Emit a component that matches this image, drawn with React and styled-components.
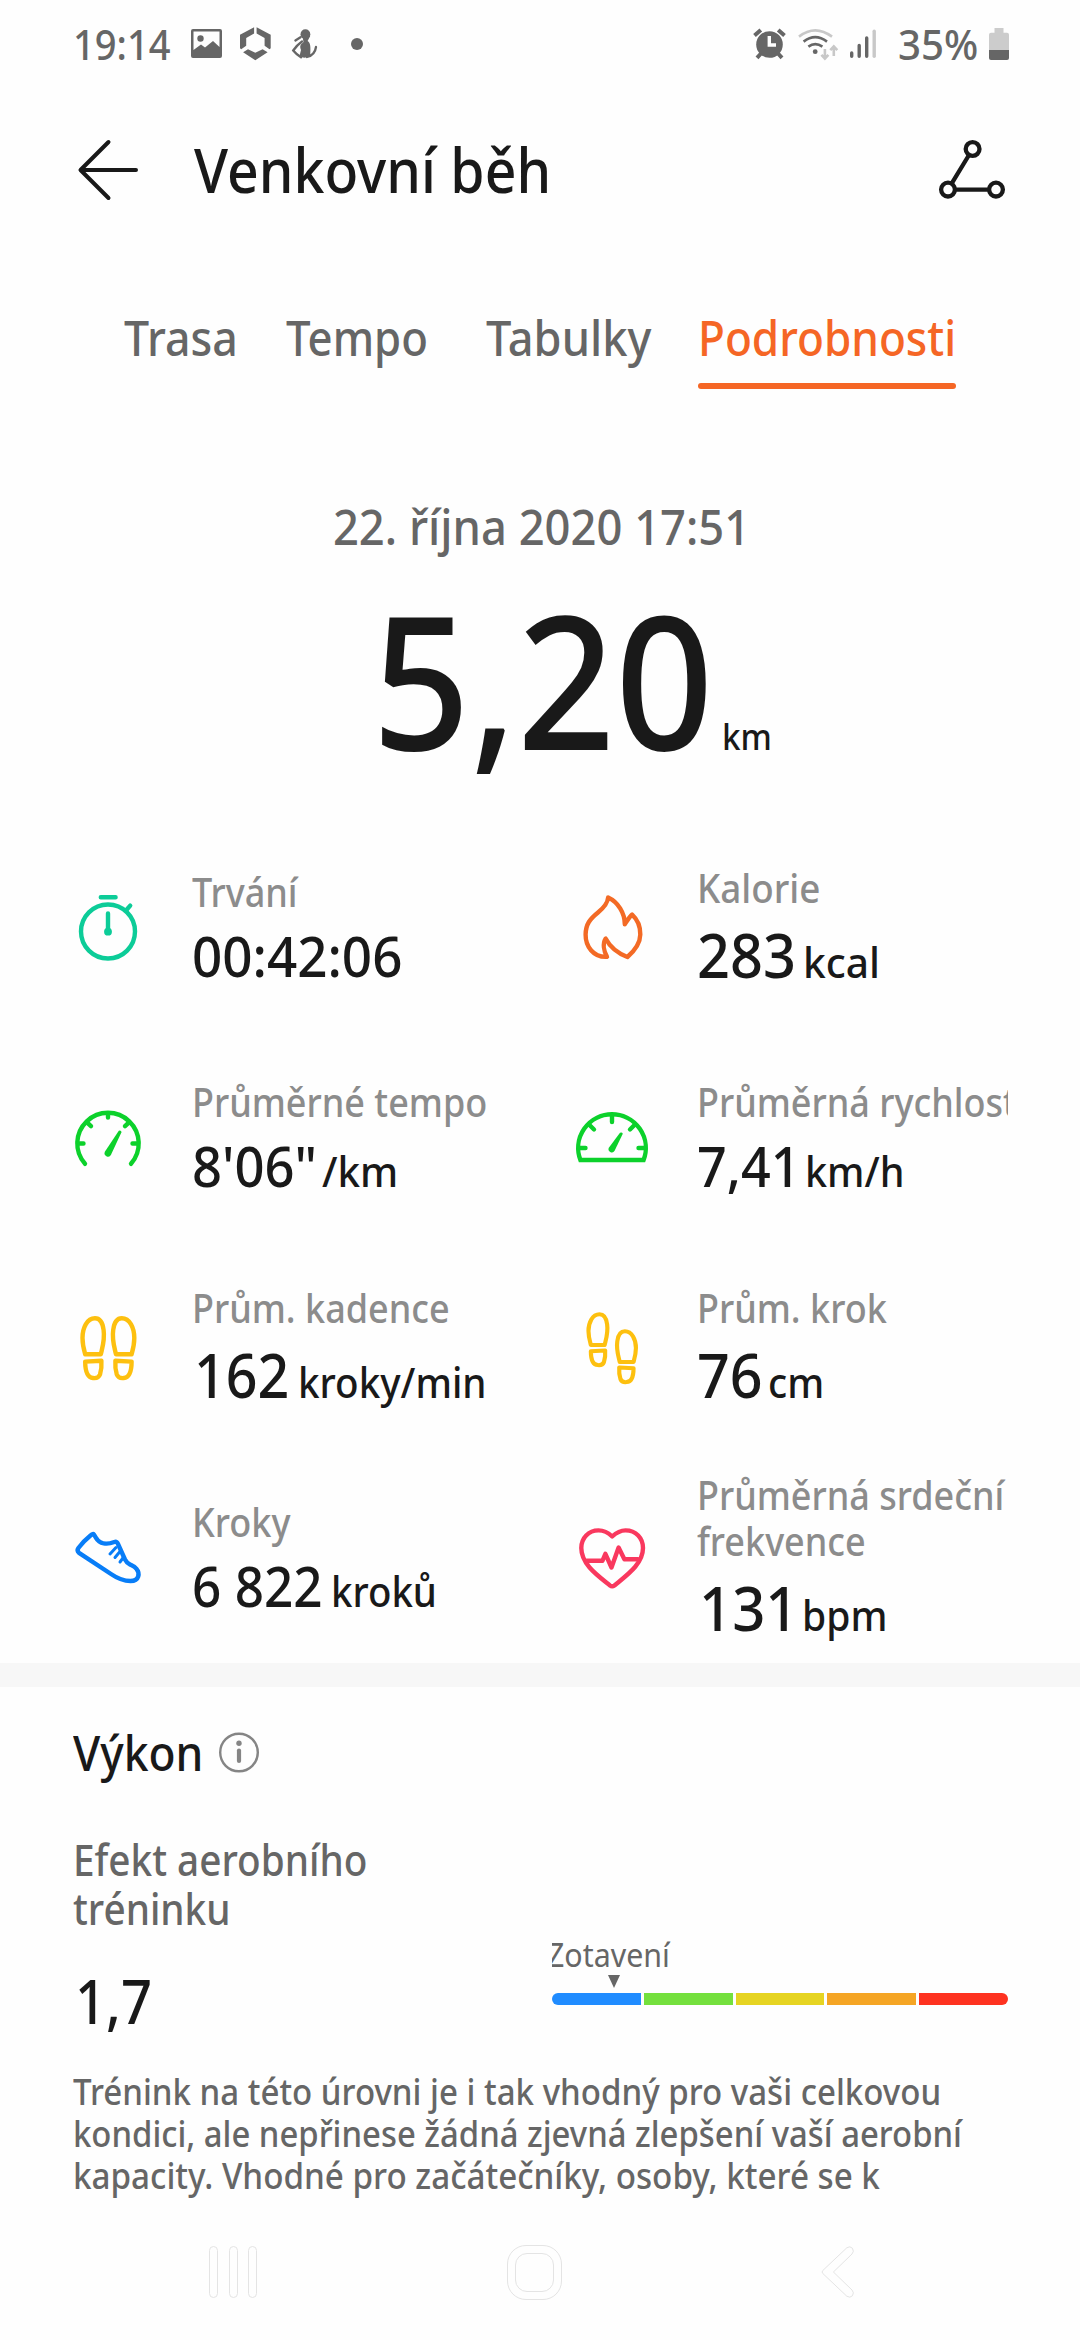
import React from 'react';
import styled, { createGlobalStyle } from 'styled-components';

const GlobalStyle = createGlobalStyle`
  body {
    margin: 0;
    background: #fefefe;
    font-family: 'Noto Sans', 'Open Sans', sans-serif;
    font-weight: 500;
    color: #191919;
  }

  svg {
    display: block;
    flex: none;
    overflow: visible;
  }
`;

const Screen = styled.div`
  display: flex;
  flex-direction: column;
  width: 1080px;
  height: 2340px;
  overflow: hidden;
`;

// The interface font runs narrow, so each text is squeezed a little
const Narrow = styled.span`
  display: inline-block;
  white-space: nowrap;
  transform: scaleX(${(p) => p.$fit || 0.9});
  transform-origin: ${(p) => p.$origin || 'left'} center;
`;

const StatusBar = styled.div`
  display: flex;
  justify-content: space-between;
  align-items: center;
  height: 87px;
  padding: 0 71px 0 73px;
  font-size: 41px;
  line-height: 50px;
  color: #666;
`;

const StatusGroup = styled.div`
  display: flex;
  align-items: center;
`;

const Clock = styled.div`
  width: 118px;
`;

const Percent = styled.div`
  width: 91px;
  margin-left: 22px;
`;

const StatusIcon = styled.svg`
  margin-right: ${(p) => p.$gap || 0}px;
`;

const Header = styled.header`
  display: flex;
  align-items: center;
  height: 166px;
  padding: 0 75px 0 78px;
`;

const Title = styled.h1`
  flex: 1;
  margin: 0 0 2px 55px;
  font-size: 62px;
  font-weight: 500;
  line-height: 84px;
`;

const Tabs = styled.nav`
  display: grid;
  grid-template-columns: 162px 200px 212px 258px;
  padding: 55px 0 0 124px;
`;

const Tab = styled.div`
  height: 75px;
  font-size: 49px;
  line-height: 58px;
  color: ${(p) => (p.$active ? '#f56625' : '#666')};
  border-bottom: 6px solid transparent;
`;

const ActiveLine = styled.div`
  height: 6px;
  margin-top: 17px;
  border-radius: 3px;
  background: #f56625;
`;

const DateLine = styled.div`
  margin-top: 107px;
  padding-left: 3px;
  font-size: 49px;
  line-height: 60px;
  text-align: center;
  color: #666;
`;

const Distance = styled.div`
  display: flex;
  align-items: baseline;
  height: 200px;
  margin-top: 22px;
  padding-left: 372px;
  font-size: 185px;
  line-height: 200px;
`;

const DistanceValue = styled.div`
  width: 350px;
`;

const DistanceUnit = styled.div`
  font-size: 36px;
  line-height: 44px;
`;

const Stats = styled.section`
  display: grid;
  grid-template-columns: 504px minmax(0, 1fr);
  grid-auto-rows: 210px;
  height: 836.5px;
  flex: none;
  margin-top: 48.5px;
  padding: 0 72px;
`;

const Stat = styled.div`
  display: flex;
  align-items: center;
  gap: ${(p) => p.$gap}px;
`;

const StatBody = styled.div`
  flex: 1;
  min-width: 0;
  padding-top: ${(p) => (p.$large ? 0 : 2)}px;
`;

const StatLabel = styled.div`
  margin: -5px 0;
  padding: 5px 0;
  overflow: hidden;
  font-size: 40px;
  line-height: 46px;
  color: #8c8c8c;
`;

const StatValue = styled.div`
  display: flex;
  align-items: baseline;
  height: ${(p) => (p.$large ? 88 : 81)}px;
  font-size: ${(p) => (p.$large ? 61 : 56)}px;
  line-height: ${(p) => (p.$large ? 88 : 81)}px;
`;

const Amount = styled.div`
  box-sizing: border-box;
  width: ${(p) => p.$width}px;
  padding-left: ${(p) => p.$inset || 0}px;
`;

const Unit = styled.div`
  font-size: 42px;
  line-height: 50px;
`;

const Divider = styled.div`
  flex: none;
  height: 24px;
  background: #f7f7f7;
`;

const Performance = styled.section`
  padding: 35px 72px 0 73px;
`;

const SectionTitle = styled.h2`
  display: flex;
  align-items: center;
  height: 60px;
  margin: 0;
  font-size: 48.5px;
  font-weight: 500;
  line-height: 60px;
`;

const SectionName = styled.span`
  width: 145.5px;
`;

const Effect = styled.div`
  display: flex;
  justify-content: space-between;
  margin-top: 53px;
`;

const EffectName = styled.div`
  font-size: 43px;
  line-height: 49px;
  color: #666;
`;

const EffectValue = styled.div`
  margin-top: 33px;
  padding-left: 2px;
  font-size: 61px;
  line-height: 70px;
`;

const Scale = styled.div`
  width: 456px;
  padding-top: 97px;
`;

const ScaleLabel = styled.div`
  overflow: hidden;
  height: 46px;
  font-size: 33px;
  font-weight: 400;
  line-height: 46px;
  color: #666;
`;

const ScaleName = styled.div`
  margin-left: -5px;
`;

const Marker = styled.div`
  width: 0;
  margin: -3px 0 0 56px;
  border: 6px solid transparent;
  border-top: 13px solid #666;
  border-bottom: 0;
`;

const ScaleBar = styled.div`
  display: grid;
  grid-template-columns: repeat(5, 1fr);
  gap: 3px;
  height: 12px;
  margin-top: 5px;
  border-radius: 6px;
  overflow: hidden;
`;

const Zone = styled.div`
  background: ${(p) => p.$color};
`;

const Advice = styled.div`
  margin-top: 34px;
  font-size: 37px;
  line-height: 42px;
  color: #666;
`;

const SystemNav = styled.footer`
  display: flex;
  align-items: center;
  height: 136px;
  margin-top: auto;
  padding-left: 209px;
`;

const Stroke = ({ color, width = 4.4, children }) => (
  <svg width="72" height="72" viewBox="0 0 72 72" fill="none" stroke={color} strokeWidth={width} strokeLinecap="round" strokeLinejoin="round">
    {children}
  </svg>
);

const StopwatchIcon = () => (
  <Stroke color="#0ccc98">
    <circle cx="36" cy="35.5" r="27" />
    <path d="M28.8 1.2H43.6M54.4 14L58.2 9.6M36 17.5V35" />
    <circle cx="36" cy="35.7" r="3.9" fill="#0ccc98" stroke="none" />
  </Stroke>
);

const FlameIcon = () => (
  <Stroke color="#f36a25">
    <path d="M32.1 1.5C42 6 48.8 17 48.8 28.3C51 25 53.5 20.5 56.1 18.6C62 24 64.4 31 64.3 38.5C64.2 47 60 53.5 51.4 61C42 57.5 34 51 29.6 42.6C26.5 47.5 27.8 55 31 60.8C17 61.5 9.5 50 9.6 38.5C9.8 28 14 23 22 16.5C28 11.5 31.8 7 32.1 1.5Z" />
  </Stroke>
);

const PaceIcon = () => (
  <Stroke color="#0cd12b">
    <path d="M13 57.8A30.7 30.7 0 1 1 59 57.8" />
    <path d="M6 37.5H11.5M66 37.5H60.5M36 8V11.5M15.5 16.8L19 20.2M56.5 16.8L53 20.2" />
    <path d="M46.8 24.8Q48.8 23.8 49.6 26L39 48.8A3.4 3.4 0 0 1 33 45.6Z" fill="#0cd12b" stroke="none" />
  </Stroke>
);

const SpeedIcon = () => (
  <Stroke color="#0cd12b">
    <path d="M4.4 54A33.8 33.8 0 1 1 67.6 54Z" strokeLinejoin="miter" />
    <path d="M3.5 42H9.5M68.5 42H62.5M36 9V16M13.5 19L18 23.5M58.5 19L54 23.5" />
    <path d="M44 26.8Q46 25.6 46.8 27.8L38.6 44.8A3.2 3.2 0 0 1 33 41.6Z" fill="#0cd12b" stroke="none" />
  </Stroke>
);

const Sole = (props) => (
  <g {...props}>
    <path d="M13.2 38.3H28.8C30.5 31 33 24 31.6 14C30.5 5.5 27 2.3 23 2.3C15 2.3 10.5 12 10.5 22C10.5 29 12 34 13.2 38.3Z" />
    <path d="M13.2 45.6L29.4 44.7C29.7 49 29.5 54 28 58.5C26.5 62.2 24 62.4 21 62C14.5 61.5 13.2 54 13.2 45.6Z" />
  </g>
);

const CadenceIcon = () => (
  <Stroke color="#fdc00f">
    <Sole />
    <Sole transform="translate(72.8 0) scale(-1 1)" />
  </Stroke>
);

const StepIcon = () => (
  <Stroke color="#fdc00f" width={4.7}>
    <Sole transform="translate(3.2 -3.6) scale(.883 .85)" />
    <Sole transform="translate(69.2 13.4) scale(-.883 .85)" />
  </Stroke>
);

const ShoeIcon = () => (
  <Stroke color="#087df7">
    <path d="M18.5 9.5C13.5 13.5 9.5 18 6.4 22C5.2 23.8 5.5 25.5 7 26.8L39 48C44.5 51.8 50.5 55 58.5 55C67.5 55 68 47 64.5 42.8C62.5 40.3 60 39.5 58 38.5C55.5 37.3 54 35.5 53 33.5L46 18C45 15.7 44.5 15.3 42.3 16C35 18.8 27.5 18 24 11.8L22 8.6C21 7.4 19.8 8.4 18.5 9.5Z" />
    <path d="M44 21.5L38 28M48 25.5L43 31.5M51 32L48 36" strokeWidth="3" />
  </Stroke>
);

const HeartIcon = () => (
  <Stroke color="#f9385e">
    <path d="M36.2 10.5C31.5 6 26.5 4.4 22.5 4.4C12.5 4.4 5.3 12 5.3 22C5.3 38 21 49 34 59.5C35.7 60.8 36.7 60.8 38.4 59.5C51 49 67 38 67 22C67 12 60 4.4 49.5 4.4C44.5 4.4 40 7 36.2 10.5Z" />
    <path d="M11 34.8H26.4L29.4 27.8L35.5 41.5L42.6 21.5L48.4 33.2H62" />
  </Stroke>
);

const BackIcon = () => (
  <svg width="61" height="62" viewBox="0 0 61 62" fill="none" stroke="#191919" strokeWidth="4" strokeLinecap="round" strokeLinejoin="round">
    <path d="M30.5 3L2.5 31L30.5 59M3 31H58" />
  </svg>
);

const RouteIcon = () => (
  <svg width="66" height="60" viewBox="0 0 66 60" fill="none" stroke="#191919" strokeWidth="4.3">
    <circle cx="33.6" cy="9" r="6.9" />
    <circle cx="9" cy="49.6" r="6.9" />
    <circle cx="57" cy="49.6" r="6.9" />
    <path d="M30 15L12.6 43.6M16 49.6H50" />
  </svg>
);

const InfoIcon = () => (
  <svg width="40" height="40" viewBox="0 0 40 40">
    <circle cx="20" cy="20.5" r="18.8" fill="none" stroke="#858585" strokeWidth="2.4" />
    <circle cx="20" cy="11.3" r="2.7" fill="#858585" />
    <path d="M20 18.5V29" stroke="#858585" strokeWidth="4.2" strokeLinecap="round" />
  </svg>
);

const NotificationIcons = () => (
  <>
    <StatusIcon $gap={18} width="31" height="29" viewBox="0 0 31 29" fill="#666">
      <path fillRule="evenodd" d="M2 0H29Q31 0 31 2V27Q31 29 29 29H2Q0 29 0 27V2Q0 0 2 0ZM2.5 2.5V21L10 15.5L14 18.5L22 12L28.5 18V2.5Z" />
      <circle cx="9.5" cy="9.5" r="3.2" />
    </StatusIcon>
    <StatusIcon $gap={21} width="31" height="34" viewBox="0 0 31 34" fill="#666">
      <path d="M14.1 .3V6.6L6.2 11V18.8L1.2 22.2L0 21.2V7.8ZM16.6 .3V6.6L24.6 11V18.8L29.5 22.2L30.7 21.2V7.8ZM3.1 25.3L8 22.3L15.3 25.8L22.6 22.3L27.6 25.3L15.3 33.2Z" />
    </StatusIcon>
    <StatusIcon $gap={34} width="25" height="30" viewBox="0 0 25 30" fill="#666" stroke="#666" strokeLinecap="round">
      <circle cx="13.4" cy="5.2" r="4.9" stroke="none" />
      <path d="M10.5 7H18.2L15.6 12C18.5 14 18.8 17 18.2 26Q13 31 7.5 27L9 21C7 16 9.5 15 11.5 13Z" stroke="none" />
      <path d="M10 12.5Q5 16 1.2 21.5Q4 25 9 28.3M3.4 11.5L8.5 8.2M24 18Q23 26 15 28" fill="none" strokeWidth="2.3" />
    </StatusIcon>
    <svg width="12" height="12" viewBox="0 0 12 12" fill="#666">
      <circle cx="6" cy="6" r="6" />
    </svg>
  </>
);

const SystemIcons = () => (
  <>
    <StatusIcon $gap={12} width="33" height="31" viewBox="0 0 33 31" fill="none" stroke="#666">
      <circle cx="16.5" cy="16.5" r="13.3" fill="#666" stroke="none" />
      <path d="M1.5 7.5L7.8 2M31.5 7.5L25.2 2M4 29.8L8 25.5M29 29.8L25 25.5" strokeWidth="4" />
      <path d="M16.3 8V17H23" stroke="#fefefe" strokeWidth="3.4" />
    </StatusIcon>
    <StatusIcon $gap={11} width="41" height="32" viewBox="0 0 41 32" fill="none" stroke="#666" strokeWidth="2.6">
      <circle cx="17.2" cy="23.7" r="2.4" fill="#666" stroke="none" />
      <path d="M10.4 18.6Q17.2 13.6 24.4 18.6M5.6 13.6Q17.2 4.6 29 13.6" />
      <path d="M1 8.6Q17.2 -4 34 8.6M26.9 21V30M23.4 26.8L26.9 30.5L30.4 26.8M35.8 28V19M32.3 22.2L35.8 18.5L39.3 22.2" stroke="#c8c8c8" />
    </StatusIcon>
    <svg width="26" height="30" viewBox="0 0 26 30" stroke="#666" strokeWidth="3.4" strokeLinecap="round">
      <path d="M1.7 24V27.3M9.2 16.4V27.3M16.7 9V27.3" />
      <path d="M24.2 2.2V27.3" stroke="#c8c8c8" />
    </svg>
  </>
);

const BatteryIcon = () => (
  <svg width="20" height="32" viewBox="0 0 20 32">
    <path d="M5.5 0H14.5V4.7H18Q20 4.7 20 6.7V22H0V6.7Q0 4.7 2 4.7H5.5Z" fill="#ccc" />
    <path d="M0 22H20V30Q20 32 18 32H2Q0 32 0 30Z" fill="#666" />
  </svg>
);

const RecentsButton = styled.div`
  display: flex;
  justify-content: space-between;
  width: 48px;
  margin-right: 250px;
`;

const RecentsBar = styled.span`
  box-sizing: border-box;
  width: 9px;
  height: 52px;
  border: 1px solid #e4e4e4;
  border-radius: 5px;
`;

const HomeButton = styled.div`
  display: flex;
  box-sizing: border-box;
  width: 55px;
  height: 55px;
  margin-right: 260px;
  padding: 7px;
  border: 1px solid #e4e4e4;
  border-radius: 19px;
`;

const HomeInner = styled.span`
  flex: 1;
  border: 1px solid #e4e4e4;
  border-radius: 12px;
`;

const stats = [
  { icon: <StopwatchIcon />, label: ['Trvání'], value: '00:42:06', fit: 0.945, width: 220 },
  { icon: <FlameIcon />, label: ['Kalorie'], labelFit: 0.92, value: '283', fit: 0.945, width: 106, unit: 'kcal', unitFit: 0.97, large: true },
  { icon: <PaceIcon />, label: ['Průměrné tempo'], value: '8\'06"', fit: 0.938, width: 130, unit: '/km', unitFit: 0.96 },
  { icon: <SpeedIcon />, label: ['Průměrná rychlost'], value: '7,41', fit: 0.93, width: 108, unit: 'km/h', unitFit: 0.94 },
  { icon: <CadenceIcon />, label: ['Prům. kadence'], value: '162', fit: 0.91, inset: 2, width: 105.5, unit: 'kroky/min', unitFit: 0.918, large: true },
  { icon: <StepIcon />, label: ['Prům. krok'], value: '76', fit: 0.94, width: 71, unit: 'cm', unitFit: 0.93, large: true },
  { icon: <ShoeIcon />, label: ['Kroky'], value: '6 822', fit: 0.915, width: 138.5, unit: 'kroků', unitFit: 0.914 },
  { icon: <HeartIcon />, label: ['Průměrná srdeční', 'frekvence'], value: '131', fit: 0.95, inset: 1.5, width: 105, unit: 'bpm', unitFit: 0.93, large: true },
];

const tabs = [
  { name: 'Trasa', fit: 0.912 },
  { name: 'Tempo', fit: 0.893 },
  { name: 'Tabulky', fit: 0.922 },
  { name: 'Podrobnosti', fit: 0.9, active: true },
];

const zones = ['#208cff', '#74e03d', '#e6d422', '#f5a524', '#fe3220'];

const advice = [
  { text: 'Trénink na této úrovni je i tak vhodný pro vaši celkovou', fit: 0.893 },
  { text: 'kondici, ale nepřinese žádná zjevná zlepšení vaší aerobní', fit: 0.888 },
  { text: 'kapacity. Vhodné pro začátečníky, osoby, které se k', fit: 0.897 },
];

const App = () => {
  return (
    <Screen>
      <GlobalStyle />
      <StatusBar>
        <StatusGroup>
          <Clock><Narrow $fit={0.93}>19:14</Narrow></Clock>
          <NotificationIcons />
        </StatusGroup>
        <StatusGroup>
          <SystemIcons />
          <Percent><Narrow $fit={0.98}>35%</Narrow></Percent>
          <BatteryIcon />
        </StatusGroup>
      </StatusBar>

      <Header>
        <BackIcon />
        <Title><Narrow $fit={0.893}>Venkovní běh</Narrow></Title>
        <RouteIcon />
      </Header>

      <Tabs>
        {tabs.map((tab) => (
          <Tab key={tab.name} $active={tab.active}>
            <Narrow $fit={tab.fit}>{tab.name}</Narrow>
            {tab.active && <ActiveLine />}
          </Tab>
        ))}
      </Tabs>

      <DateLine><Narrow $fit={0.925} $origin="center">22. října 2020 17:51</Narrow></DateLine>
      <Distance>
        <DistanceValue><Narrow $fit={0.928}>5,20</Narrow></DistanceValue>
        <DistanceUnit><Narrow $fit={0.92}>km</Narrow></DistanceUnit>
      </Distance>

      <Stats>
        {stats.map((stat, i) => (
          <Stat key={stat.label[0]} $gap={i % 2 ? 49 : 48}>
            {stat.icon}
            <StatBody $large={stat.large}>
              <StatLabel>
                {stat.label.map((line) => (
                  <div key={line}><Narrow $fit={stat.labelFit}>{line}</Narrow></div>
                ))}
              </StatLabel>
              <StatValue $large={stat.large}>
                <Amount $width={stat.width} $inset={stat.inset}><Narrow $fit={stat.fit}>{stat.value}</Narrow></Amount>
                {stat.unit && <Unit><Narrow $fit={stat.unitFit}>{stat.unit}</Narrow></Unit>}
              </StatValue>
            </StatBody>
          </Stat>
        ))}
      </Stats>

      <Divider />

      <Performance>
        <SectionTitle>
          <SectionName><Narrow $fit={0.914}>Výkon</Narrow></SectionName>
          <InfoIcon />
        </SectionTitle>
        <Effect>
          <div>
            <EffectName>
              <div><Narrow>Efekt aerobního</Narrow></div>
              <div><Narrow>tréninku</Narrow></div>
            </EffectName>
            <EffectValue><Narrow $fit={0.89}>1,7</Narrow></EffectValue>
          </div>
          <Scale>
            <ScaleLabel><ScaleName><Narrow $fit={0.92}>Zotavení</Narrow></ScaleName></ScaleLabel>
            <Marker />
            <ScaleBar>
              {zones.map((color) => <Zone key={color} $color={color} />)}
            </ScaleBar>
          </Scale>
        </Effect>
        <Advice>
          {advice.map((line) => (
            <div key={line.text}><Narrow $fit={line.fit}>{line.text}</Narrow></div>
          ))}
        </Advice>
      </Performance>

      <SystemNav>
        <RecentsButton>
          <RecentsBar />
          <RecentsBar />
          <RecentsBar />
        </RecentsButton>
        <HomeButton><HomeInner /></HomeButton>
        <svg width="32" height="52" viewBox="0 0 32 52" fill="none" stroke="#e4e4e4">
          <path d="M.8 24.5L24.8 1.8Q28 -.4 30.4 2.2Q32.6 5.4 30 8L11.4 26L30 44Q32.6 46.6 30.4 49.8Q28 52.4 24.8 50.2L.8 27.5Q-.6 26 .8 24.5Z" />
        </svg>
      </SystemNav>
    </Screen>
  );
};

export default App;
